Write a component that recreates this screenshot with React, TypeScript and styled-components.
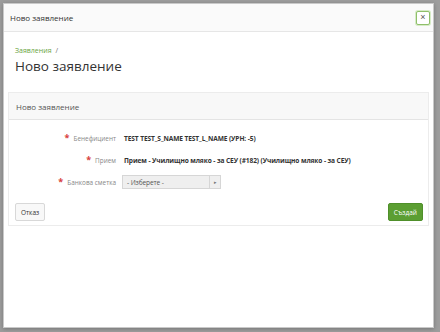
import styled, { createGlobalStyle } from "styled-components";

const GlobalStyle = createGlobalStyle`
  html, body {
    margin: 0;
    padding: 0;
    background: #9d9d9d;
    font-family: "Open Sans", "Liberation Sans", sans-serif;
  }
`;

const Backdrop = styled.div`
  width: 440px;
  height: 332px;
  padding: 3px 6px 4px 3px;
  box-sizing: border-box;
`;

const Modal = styled.div`
  height: 100%;
  display: flex;
  flex-direction: column;
  background: #fff;
  border: 1px solid #c9c9c9;
  box-sizing: border-box;
  box-shadow: 0 1px 4px rgba(0, 0, 0, 0.25);
`;

const ModalHeader = styled.div`
  height: 27px;
  display: flex;
  align-items: center;
  justify-content: space-between;
  padding: 0 3px 0 6px;
  background: #fafafa;
  border-bottom: 1px solid #e6e6e6;
  font-size: 8px;
  color: #333;
`;

const CloseButton = styled.button`
  width: 14px;
  height: 14px;
  padding: 0;
  display: flex;
  align-items: center;
  justify-content: center;
  background: #fff;
  border: 1px solid #8fbf6a;
  box-shadow: 0 0 0 1px #d6ebc6;
  border-radius: 2px;
  color: #555;
  font-size: 9px;
  line-height: 1;
`;

const ModalBody = styled.div`
  padding: 14px 4px 0 4px;
`;

const Breadcrumb = styled.div`
  padding-left: 7px;
  font-size: 7px;
  color: #6f6f6f;

  a {
    color: #6aa443;
    text-decoration: none;
    margin-right: 4px;
  }
`;

const PageTitle = styled.h1`
  margin: 2px 0 17px 7px;
  font-size: 13.5px;
  font-weight: 400;
  color: #333;
`;

const Panel = styled.div`
  border: 1px solid #ececec;
  background: #fff;
`;

const PanelHeader = styled.div`
  height: 26px;
  display: flex;
  align-items: center;
  padding-left: 7px;
  background: #f8f8f8;
  border-bottom: 1px solid #e4e4e4;
  font-size: 8px;
  color: #555;
`;

const Form = styled.div`
  padding: 7px 0 0;
  display: grid;
  grid-template-columns: 107px 1fr;
  column-gap: 8px;
`;

const Label = styled.div`
  height: 22px;
  display: flex;
  align-items: center;
  justify-content: flex-end;
  font-size: 6.4px;
  color: #888;

  span {
    color: #d8403a;
    margin-right: 4px;
    font-size: 9px;
    font-weight: 700;
    line-height: 1;
    transform: translateY(-1px);
  }
`;

const Value = styled.div`
  height: 22px;
  display: flex;
  align-items: center;
  font-size: 6.6px;
  letter-spacing: -0.1px;
  font-weight: 700;
  color: #333;
  white-space: nowrap;
`;

const Select = styled.div`
  width: 99px;
  height: 14px;
  margin-left: -2px;
  display: flex;
  align-items: center;
  justify-content: space-between;
  box-sizing: border-box;
  border: 1px solid #d6d6d6;
  background: #efefef;
  font-weight: 400;
  color: #555;
  padding-left: 4px;

  i {
    width: 10px;
    height: 12px;
    border-left: 1px solid #d6d6d6;
    display: flex;
    align-items: center;
    justify-content: center;
    font-style: normal;
    font-size: 5px;
    color: #777;
  }
`;

const Footer = styled.div`
  display: flex;
  justify-content: space-between;
  align-items: center;
  padding: 10px 5px 4px 6px;
`;

const Button = styled.button<{ primary?: boolean }>`
  height: 18px;
  padding: 0 5px;
  font-family: inherit;
  font-size: 6.5px;
  border-radius: 2px;
  border: 1px solid ${p => (p.primary ? "#4f8f2a" : "#d8d8d8")};
  background: ${p => (p.primary ? "#5b9e32" : "#f8f8f8")};
  color: ${p => (p.primary ? "#fff" : "#333")};
`;

function App() {
  return (
    <>
      <GlobalStyle />
      <Backdrop>
        <Modal>
          <ModalHeader>
            Ново заявление
            <CloseButton>×</CloseButton>
          </ModalHeader>
          <ModalBody>
            <Breadcrumb>
              <a href="#">Заявления</a>/
            </Breadcrumb>
            <PageTitle>Ново заявление</PageTitle>
            <Panel>
              <PanelHeader>Ново заявление</PanelHeader>
              <Form>
                <Label><span>*</span>Бенефициент</Label>
                <Value>TEST TEST_S_NAME TEST_L_NAME (УРН: -5)</Value>
                <Label><span>*</span>Прием</Label>
                <Value>Прием - Училищно мляко - за СЕУ (#182) (Училищно мляко - за СЕУ)</Value>
                <Label><span>*</span>Банкова сметка</Label>
                <Value>
                  <Select>
                    - Изберете -<i>▸</i>
                  </Select>
                </Value>
              </Form>
              <Footer>
                <Button>Отказ</Button>
                <Button primary>Създай</Button>
              </Footer>
            </Panel>
          </ModalBody>
        </Modal>
      </Backdrop>
    </>
  );
}

export default App;
